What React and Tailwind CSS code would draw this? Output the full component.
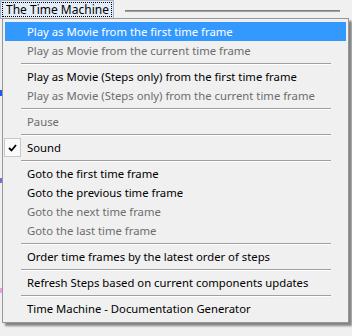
const items = [
    { label: "Play as Movie from the first time frame", active: true },
    { label: "Play as Movie from the current time frame", disabled: true },
    { sep: true },
    { label: "Play as Movie (Steps only) from the first time frame" },
    { label: "Play as Movie (Steps only) from the current time frame", disabled: true },
    { sep: true },
    { label: "Pause", disabled: true },
    { sep: true },
    { label: "Sound", checked: true },
    { sep: true },
    { label: "Goto the first time frame" },
    { label: "Goto the previous time frame" },
    { label: "Goto the next time frame", disabled: true },
    { label: "Goto the last time frame", disabled: true },
    { sep: true },
    { label: "Order time frames by the latest order of steps" },
    { sep: true },
    { label: "Refresh Steps based on current components updates" },
    { sep: true },
    { label: "Time Machine - Documentation Generator" },
];

function MenuRow({ item }) {
    if (item.sep) {
        return (
            <div className="flex h-[7px] items-center pl-[16px] pr-[15px]">
                <div className="w-full border-t border-b border-t-[#a0a0a0] border-b-white" />
            </div>
        );
    }

    let rowClass = "flex h-[19px] items-center";
    if (item.active) rowClass += " bg-[#3399ff] text-white";
    else if (item.disabled) rowClass += " text-[#6d6d6d]";
    else rowClass += " text-black";

    return (
        <div className={rowClass}>
            <div className="flex h-[19px] w-[22px] shrink-0 items-center">
                {item.checked && (
                    <div className="-ml-[1px] flex h-[19px] w-[17px] items-center justify-center border border-[#c8c8c8] bg-[#fafafa]">
                        <svg width="9" height="8" viewBox="0 0 9 8">
                            <path d="M1 4 L3.5 6.5 L8 1" stroke="#000" strokeWidth="1.8" fill="none" />
                        </svg>
                    </div>
                )}
            </div>
            <span className="whitespace-nowrap">{item.label}</span>
        </div>
    );
}

export default function App() {
    return (
        <div className="relative h-[336px] w-[352px] overflow-hidden bg-[#f0f0f0] font-['Segoe_UI','Noto_Sans',sans-serif] text-[11.3px] leading-none">
            <div className="flex h-[18px] items-start">
                <div className="h-[19px] w-[114px] shrink-0 border border-[#a3b4c9] bg-[#e4edf7] p-[1px]">
                    <div className="flex h-full items-center whitespace-nowrap border border-dotted border-black pl-[3px] text-[12px] text-black">
                        The Time Machine
                    </div>
                </div>
                <div className="ml-[11px] mt-[10px] h-[2px] w-[215px] border-t border-b border-t-[#808080] border-b-[#a0a0a0]" />
            </div>

            <div className="absolute left-0 top-[90px] h-[6px] w-[2px] bg-[#2255ff]" />
            <div className="absolute left-0 top-[178px] h-[5px] w-[2px] bg-[#8866cc]" />
            <div className="absolute left-0 top-[288px] h-[5px] w-[2px] bg-[#f0a0e0]" />

            <div className="absolute left-[2px] top-[18px] w-[347px] border border-[#979797] bg-[#f0f0f0] px-[2px] pb-[4px] pt-[3px] shadow-[3px_3px_2px_rgba(0,0,0,0.45)]">
                {items.map((item, i) => (
                    <MenuRow key={i} item={item} />
                ))}
            </div>
        </div>
    );
}
